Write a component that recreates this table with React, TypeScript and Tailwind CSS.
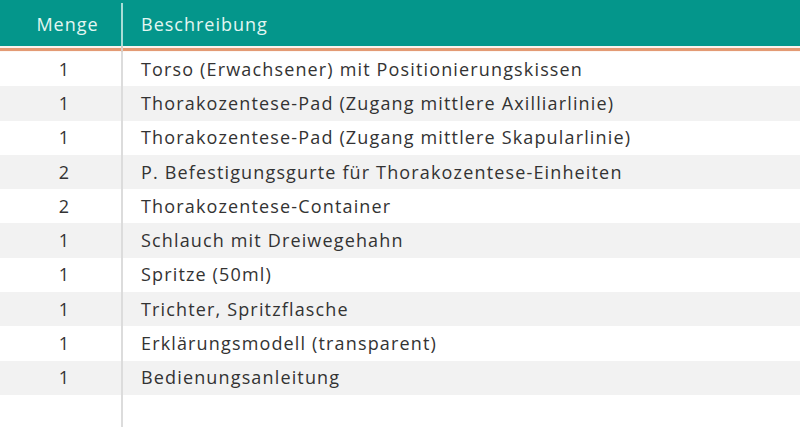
const rows: [string, string][] = [
  ["1", "Torso (Erwachsener) mit Positionierungskissen"],
  ["1", "Thorakozentese-Pad (Zugang mittlere Axilliarlinie)"],
  ["1", "Thorakozentese-Pad (Zugang mittlere Skapularlinie)"],
  ["2", "P. Befestigungsgurte für Thorakozentese-Einheiten"],
  ["2", "Thorakozentese-Container"],
  ["1", "Schlauch mit Dreiwegehahn"],
  ["1", "Spritze (50ml)"],
  ["1", "Trichter, Spritzflasche"],
  ["1", "Erklärungsmodell (transparent)"],
  ["1", "Bedienungsanleitung"],
]

export default function App() {
  return (
    <div
      className="w-[800px] h-[427px] bg-white overflow-hidden"
      style={{ fontFamily: '"Open Sans", "Liberation Sans", sans-serif' }}
    >
      <div className="flex h-[46px] bg-[#04968b] text-[18px] tracking-[1px] text-[#e3f6f2]">
        <div className="w-[121px] flex items-center justify-center pl-[14px] pt-[2px]">Menge</div>
        <div className="w-[2px] mt-[3px] bg-[#a9ddd6]" />
        <div className="flex-1 flex items-center pl-[18px] pt-[2px]">Beschreibung</div>
      </div>
      <div className="flex h-[6px]">
        <div className="w-[121px] flex flex-col">
          <div className="h-[2px] bg-[#fbf3ee]" />
          <div className="h-[3px] bg-[#e39a74]" />
          <div className="h-[1px] bg-[#fdf7f2]" />
        </div>
        <div className="w-[2px] bg-[#d9cfc8]" />
        <div className="flex-1 flex flex-col">
          <div className="h-[2px] bg-[#fbf3ee]" />
          <div className="h-[3px] bg-[#e39a74]" />
          <div className="h-[1px] bg-[#fdf7f2]" />
        </div>
      </div>
      <div className="flex flex-col text-[18px] tracking-[1.15px] text-[#333]">
        {rows.map(([qty, desc], i) => (
          <div
            key={i}
            className={`flex h-[34.3px] ${i % 2 === 1 ? "bg-[#f2f2f2]" : "bg-white"}`}
          >
            <div className="w-[121px] flex items-center justify-center pl-[8px]">{qty}</div>
            <div className="w-[2px] bg-[#dcdcdc]" />
            <div className="flex-1 flex items-center pl-[18px]">{desc}</div>
          </div>
        ))}
        <div className="flex h-[40px]">
          <div className="w-[121px]" />
          <div className="w-[2px] bg-[#dcdcdc]" />
          <div className="flex-1" />
        </div>
      </div>
    </div>
  )
}
